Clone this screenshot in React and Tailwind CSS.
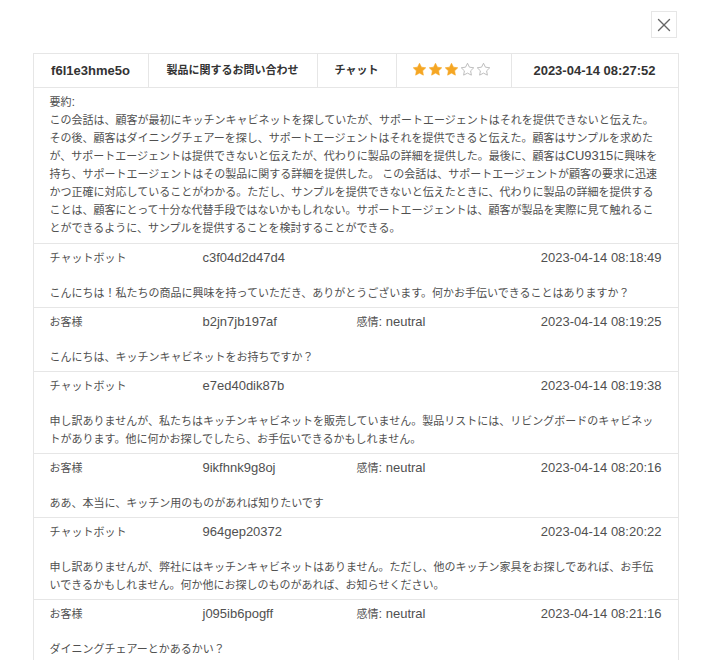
import React from 'react';
import { X } from 'lucide-react';

// CJK glyphs render at 11px, latin runs at 13px (as in the original)
const Mixed = ({ text }) =>
  text.split(/([\x20-\x7E]+)/).map((part, i) => {
    if (!/[\x21-\x7E]/.test(part)) return part;
    return (
      <span key={i} className="inline-block text-[13px] leading-[13px]">
        {part}
      </span>
    );
  });

const Star = ({ filled }) => (
  <svg width="15" height="15" viewBox="0 0 24 24">
    <path
      d="M12 2l3.09 6.26L22 9.27l-5 4.87 1.18 6.88L12 17.77l-6.18 3.25L7 14.14 2 9.27l6.91-1.01L12 2z"
      fill={filled ? '#f5a623' : 'none'}
      stroke={filled ? '#f5a623' : '#b5b5b5'}
      strokeWidth={filled ? 1 : 1.4}
      strokeLinejoin="round"
    />
  </svg>
);

const summary =
  'この会話は、顧客が最初にキッチンキャビネットを探していたが、サポートエージェントはそれを提供できないと伝えた。その後、顧客はダイニングチェアーを探し、サポートエージェントはそれを提供できると伝えた。顧客はサンプルを求めたが、サポートエージェントは提供できないと伝えたが、代わりに製品の詳細を提供した。最後に、顧客はCU9315に興味を持ち、サポートエージェントはその製品に関する詳細を提供した。 この会話は、サポートエージェントが顧客の要求に迅速かつ正確に対応していることがわかる。ただし、サンプルを提供できないと伝えたときに、代わりに製品の詳細を提供することは、顧客にとって十分な代替手段ではないかもしれない。サポートエージェントは、顧客が製品を実際に見て触れることができるように、サンプルを提供することを検討することができる。';

const messages = [
  {
    role: 'チャットボット',
    id: 'c3f04d2d47d4',
    time: '2023-04-14 08:18:49',
    text: 'こんにちは！私たちの商品に興味を持っていただき、ありがとうございます。何かお手伝いできることはありますか？',
  },
  {
    role: 'お客様',
    id: 'b2jn7jb197af',
    sentiment: 'neutral',
    time: '2023-04-14 08:19:25',
    text: 'こんにちは、キッチンキャビネットをお持ちですか？',
  },
  {
    role: 'チャットボット',
    id: 'e7ed40dik87b',
    time: '2023-04-14 08:19:38',
    text: '申し訳ありませんが、私たちはキッチンキャビネットを販売していません。製品リストには、リビングボードのキャビネットがあります。他に何かお探しでしたら、お手伝いできるかもしれません。',
  },
  {
    role: 'お客様',
    id: '9ikfhnk9g8oj',
    sentiment: 'neutral',
    time: '2023-04-14 08:20:16',
    text: 'ああ、本当に、キッチン用のものがあれば知りたいです',
  },
  {
    role: 'チャットボット',
    id: '964gep20372',
    time: '2023-04-14 08:20:22',
    text: '申し訳ありませんが、弊社にはキッチンキャビネットはありません。ただし、他のキッチン家具をお探しであれば、お手伝いできるかもしれません。何か他にお探しのものがあれば、お知らせください。',
  },
  {
    role: 'お客様',
    id: 'j095ib6pogff',
    sentiment: 'neutral',
    time: '2023-04-14 08:21:16',
    text: 'ダイニングチェアーとかあるかい？',
  },
];

export default function App() {
  return (
    <div className="min-h-[660px] bg-white pt-[11px] font-['Liberation_Sans','Noto_Sans_CJK_JP',sans-serif] text-[11px] text-[#505050]">
      <div className="mx-auto w-[646px]">
        {/* Close */}
        <div className="flex justify-end pr-[2px]">
          <button className="flex h-[27px] w-[26px] items-center justify-center border border-[#e6e6e6] text-[#666]">
            <X size={22} strokeWidth={1.5} />
          </button>
        </div>

        <div className="mt-[15px] border border-b-0 border-[#e6e6e6]">
          {/* Header */}
          <div className="flex h-[34px] border-b border-[#e6e6e6] font-bold text-[#333]">
            <div className="flex w-[114px] items-center justify-center">
              <Mixed text="f6l1e3hme5o" />
            </div>
            <div className="flex w-[169px] items-center justify-center border-l border-[#e6e6e6]">
              製品に関するお問い合わせ
            </div>
            <div className="flex w-[79px] items-center justify-center border-l border-[#e6e6e6]">
              チャット
            </div>
            <div className="flex w-[115px] items-center justify-center gap-[1px] border-l border-[#e6e6e6] pb-[2px] pr-[5px]">
              {[1, 2, 3, 4, 5].map((n) => (
                <Star key={n} filled={n <= 3} />
              ))}
            </div>
            <div className="flex flex-1 items-center justify-center border-l border-[#e6e6e6]">
              <Mixed text="2023-04-14 08:27:52" />
            </div>
          </div>

          {/* Summary */}
          <div className="px-4 pb-[6px] pt-[5px] leading-[18px]">
            <div>
              <Mixed text="要約:" />
            </div>
            <p>
              <Mixed text={summary} />
            </p>
          </div>

          {/* Messages */}
          {messages.map((m) => (
            <div key={m.id} className="border-t border-[#e6e6e6] px-4 pb-[5px] pt-[5px]">
              <div className="flex h-[18px] items-center">
                <div className="w-[153px]">{m.role}</div>
                <div className="w-[154px]">
                  <Mixed text={m.id} />
                </div>
                <div className="flex-1">
                  {m.sentiment && <Mixed text={`感情: ${m.sentiment}`} />}
                </div>
                <div>
                  <Mixed text={m.time} />
                </div>
              </div>
              <p className="mt-[17px] leading-[18px]">
                <Mixed text={m.text} />
              </p>
            </div>
          ))}
        </div>
      </div>
    </div>
  );
}
